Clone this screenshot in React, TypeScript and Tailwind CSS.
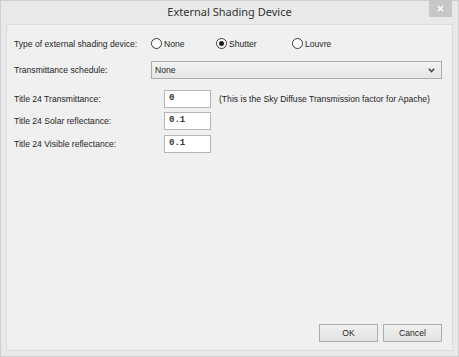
export default function App() {
  return (
    <div className="w-[459px] h-[357px] bg-[#e9e9e9] border border-[#cfcfcf] flex flex-col font-['Liberation_Sans',Arial,sans-serif] text-[8.6px] text-[#1e1e1e] whitespace-nowrap">
      {/* Title bar */}
      <div className="relative h-[23px] flex items-center justify-center">
        <span className="text-[11px] text-[#333] font-['Noto_Sans',sans-serif]">External Shading Device</span>
        <div className="absolute right-[6px] top-[-1px] w-[23px] h-[17px] bg-[#c7c7c7] flex items-center justify-center">
          <svg width="7" height="7" viewBox="0 0 7 7">
            <path d="M1 1L6 6M6 1L1 6" stroke="#fff" strokeWidth="1.6" />
          </svg>
        </div>
      </div>

      {/* Client area */}
      <div className="mx-[5px] mb-[5px] flex-1 border border-[#dcdcdc] bg-[#f0f0f0] flex flex-col pl-[7px] pr-[10px]">
        {/* Shading type */}
        <div className="mt-[12px] h-[14px] flex items-center">
          <span className="w-[137px] shrink-0">Type of external shading device:</span>
          <Radio label="None" width="w-[65px]" />
          <Radio label="Shutter" width="w-[76px]" checked />
          <Radio label="Louvre" width="w-[80px]" />
        </div>

        {/* Schedule */}
        <div className="mt-[10px] h-[18px] flex items-center">
          <span className="w-[137px] shrink-0">Transmittance schedule:</span>
          <div className="w-[291px] shrink-0 h-[18px] border border-[#acacac] bg-gradient-to-b from-[#f2f2f2] to-[#e5e5e5] flex items-center justify-between pl-[3px] pr-[6px]">
            <span>None</span>
            <svg width="7" height="5" viewBox="0 0 7 5">
              <path d="M0.8 0.8L3.5 3.6L6.2 0.8" stroke="#444" strokeWidth="1.5" fill="none" />
            </svg>
          </div>
        </div>

        <Field label="Title 24 Transmittance:" value="0" className="mt-[11px]" note="(This is the Sky Diffuse Transmission factor for Apache)" />
        <Field label="Title 24 Solar reflectance:" value="0.1" className="mt-[4px]" />
        <Field label="Title 24 Visible reflectance:" value="0.1" className="mt-[5px]" />

        {/* Buttons */}
        <div className="mt-auto mb-[8px] flex justify-end gap-[5px]">
          <Button label="OK" />
          <Button label="Cancel" />
        </div>
      </div>
    </div>
  );
}

function Radio({ label, width, checked }: { label: string; width: string; checked?: boolean }) {
  return (
    <div className={`${width} shrink-0 flex items-center`}>
      <div className="w-[11px] h-[11px] shrink-0 rounded-full border border-[#3a3a3a] bg-white flex items-center justify-center">
        {checked && <div className="w-[5px] h-[5px] rounded-full bg-[#1a1a1a]" />}
      </div>
      <span className="ml-[2px]">{label}</span>
    </div>
  );
}

function Field({ label, value, note, className }: { label: string; value: string; note?: string; className: string }) {
  return (
    <div className={`${className} h-[18px] flex items-center`}>
      <span className="w-[150px] shrink-0">{label}</span>
      <div className="w-[47px] shrink-0 h-[18px] border border-[#b5b5b5] bg-white flex items-center pl-[4px] font-['Liberation_Mono',monospace] text-[9px] font-semibold text-[#333]">
        {value}
      </div>
      {note && <span className="ml-[8px]">{note}</span>}
    </div>
  );
}

function Button({ label }: { label: string }) {
  return (
    <div className="w-[59px] h-[18px] border border-[#acacac] bg-gradient-to-b from-[#f0f0f0] to-[#e3e3e3] flex items-center justify-center">
      {label}
    </div>
  );
}
